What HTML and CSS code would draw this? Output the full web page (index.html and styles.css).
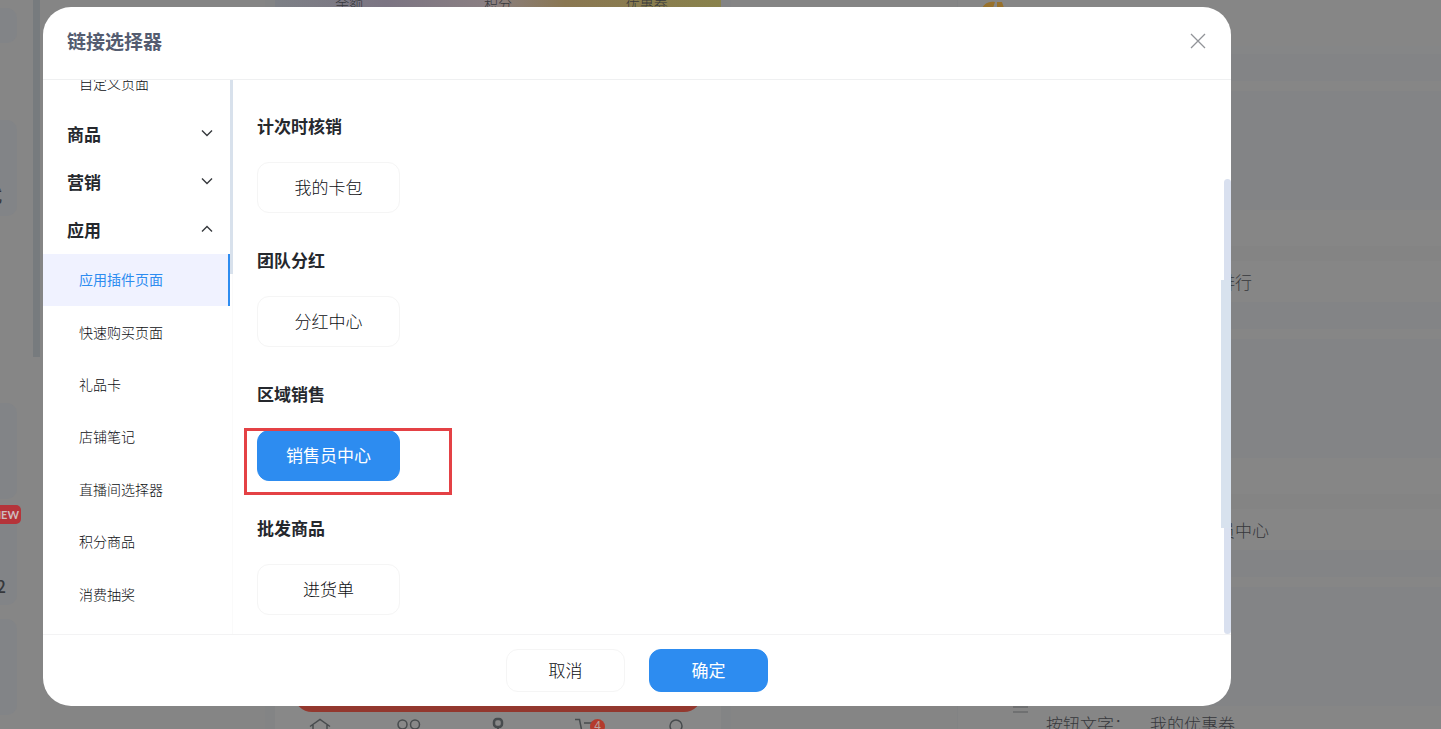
FILE: index.html
```html
<!DOCTYPE html>
<html lang="zh-CN">
<head>
<meta charset="utf-8">
<title>链接选择器</title>
<link rel="stylesheet" href="styles.css">
</head>
<body>
<div class="page">
  <aside class="widgets">
    <div class="widget widget-top"></div>
    <div class="widget"><span class="widget-text widget-text-cut">式</span></div>
    <div class="widget widget-late"><span class="tag-new">NEW</span></div>
    <div class="widget widget-count"><span class="widget-text">2</span></div>
  </aside>
  <section class="phone">
    <div class="wallet"><span>余额</span><span>积分</span><span>优惠券</span></div>
    <div class="phone-foot">
      <div class="banner"></div>
      <div class="tabbar">
        <svg width="24" height="24" viewBox="0 0 24 24"><path d="M2 14.500 12 7.500l10 7M5 13v10h14V13"/></svg>
        <svg width="24" height="24" viewBox="0 0 24 24"><circle cx="5.500" cy="12.500" r="4.500"/><circle cx="18" cy="12.500" r="4.500"/><circle cx="5.500" cy="24" r="4.500"/></svg>
        <svg width="24" height="24" viewBox="0 0 24 24"><rect x="8" y="7" width="8" height="8" rx="3" stroke-width="2.500"/><path d="M12 15v8" stroke-width="2"/></svg>
        <span class="cart">
          <svg width="24" height="24" viewBox="0 0 24 24"><path d="M0 7.500h4.500L7 20h12l2-9H9"/></svg>
          <span class="cart-count">4</span>
        </span>
        <svg width="24" height="24" viewBox="0 0 24 24"><circle cx="12" cy="14" r="6"/></svg>
      </div>
    </div>
  </section>
  <section class="settings">
    <div class="panel-head"><svg width="24" height="8" viewBox="0 0 24 8"><path d="M1 8C4 3 8 1 14 2L12 8zM16 2h5l2 6h-7z"/></svg></div>
    <div class="rule"></div>
    <div class="card card-small"></div>
    <div class="row row-thin"></div>
    <div class="card"></div>
    <div class="row row-field"><span>排行</span></div>
    <div class="card card-small"></div>
    <div class="row row-thin"></div>
    <div class="card"></div>
    <div class="row row-field"><span>员中心</span></div>
    <div class="card card-small"></div>
    <div class="row row-thin"></div>
    <div class="card"></div>
    <div class="field-line">
      <span class="handle"></span>
      <span class="field-label">按钮文字：</span>
      <span class="field-value">我的优惠券</span>
    </div>
  </section>
</div>

<div class="modal" role="dialog" aria-labelledby="modal-title">
  <header class="modal-head">
    <h1 class="modal-title" id="modal-title">链接选择器</h1>
    <button class="close" type="button" aria-label="关闭"><svg width="16" height="16" viewBox="0 0 16 16"><path d="M1 1l14 14M15 1L1 15"/></svg></button>
  </header>
  <div class="modal-body">
    <nav class="menu">
      <a class="menu-item menu-cut" href="#">自定义页面</a>
      <button class="group" type="button">商品<svg width="12" height="8" viewBox="0 0 12 8"><path d="M1 1.500l5 5 5-5"/></svg></button>
      <button class="group" type="button">营销<svg width="12" height="8" viewBox="0 0 12 8"><path d="M1 1.500l5 5 5-5"/></svg></button>
      <button class="group" type="button">应用<svg width="12" height="8" viewBox="0 0 12 8"><path d="M1 6.500l5-5 5 5"/></svg></button>
      <div class="submenu">
        <a class="menu-item active" href="#">应用插件页面</a>
        <a class="menu-item" href="#">快速购买页面</a>
        <a class="menu-item" href="#">礼品卡</a>
        <a class="menu-item" href="#">店铺笔记</a>
        <a class="menu-item" href="#">直播间选择器</a>
        <a class="menu-item" href="#">积分商品</a>
        <a class="menu-item" href="#">消费抽奖</a>
      </div>
      <span class="menu-thumb"></span>
    </nav>
    <main class="links">
      <section class="link-group"><h2>计次时核销</h2><button class="link" type="button">我的卡包</button></section>
      <section class="link-group"><h2>团队分红</h2><button class="link" type="button">分红中心</button></section>
      <section class="link-group"><h2>区域销售</h2><div class="marked"><button class="link chosen" type="button">销售员中心</button></div></section>
      <section class="link-group"><h2>批发商品</h2><button class="link" type="button">进货单</button></section>
      <span class="thumb thumb-outer"></span>
      <span class="thumb thumb-inner"></span>
    </main>
  </div>
  <footer class="modal-foot">
    <button class="action" type="button">取消</button>
    <button class="action primary" type="button">确定</button>
  </footer>
</div>
</body>
</html>
```
FILE: styles.css
```css
*, *::after { box-sizing: border-box; }
body {
  margin: 0;
  height: 100vh;
  overflow: hidden;
  position: relative;
  background: #858585;
  color: #0c0e12;
  font-family: "Noto Sans CJK SC", sans-serif;
  font-size: 17px;
  font-weight: 300;
}
button { font: inherit; color: inherit; background: none; border: 0; padding: 0; margin: 0; }
a { color: inherit; text-decoration: none; }
h1, h2 { margin: 0; font-weight: 700; }
svg { display: block; fill: none; }

.page { display: flex; height: 100%; overflow: hidden; color: #36383c; }

.widgets {
  width: 40px;
  flex: none;
  padding-right: 23px;
  background: linear-gradient(#777b7e, #777b7e) right top / 7px 357px no-repeat #868686;
}
.widget { position: relative; height: 96px; margin-bottom: 77px; border-radius: 0 10px 10px 0; background: #828487; }
.widget-top { height: 35px; margin-top: 8px; }
.widget-late { margin-top: 187px; margin-bottom: 10px; }
.widget-count { margin-bottom: 14px; box-shadow: 0 110px 0 #828487; }
.widget-text { position: absolute; right: 11px; bottom: 6px; line-height: 26px; font-weight: 500; }
.widget-text-cut { right: 15px; bottom: 8px; }
.tag-new {
  position: absolute;
  z-index: 1;
  right: -4px;
  bottom: -25px;
  height: 19px;
  padding: 0 2px;
  border-radius: 5px;
  background: #b5343a;
  color: #cdbcbe;
  white-space: nowrap;
  font: 700 11px/19px Lato, sans-serif;
}

.phone {
  width: 446px;
  flex: none;
  margin-left: 235px;
  display: flex;
  flex-direction: column;
  justify-content: space-between;
  background: #888;
  box-shadow: 0 0 0 10px #838485;
}
.wallet {
  display: grid;
  grid-template-columns: repeat(3, 1fr);
  height: 24px;
  text-align: center;
  font-size: 14px;
  line-height: 7px;
  background: linear-gradient(90deg, #7d8086, #7c7583 25%, #8b8083 48%, #8a7752 65%, #89824c);
}
.phone-foot { height: 57px; flex: none; }
.banner { height: 40px; margin: 0 19px; border-radius: 0 0 18px 18px; background: #93382e; }
.tabbar { display: grid; grid-template-columns: repeat(5, 1fr); justify-items: center; height: 17px; overflow: hidden; }
.tabbar svg { stroke: #484c4e; stroke-width: 1.5; }
.cart { position: relative; }
.cart-count {
  position: absolute;
  left: 15px;
  top: 7px;
  width: 15px;
  height: 15px;
  border-radius: 50%;
  background: #b43b2d;
  color: #b9a5a0;
  text-align: center;
  font: 12px/15px "Liberation Sans", sans-serif;
}

.settings { flex: 1; margin-left: 236px; padding-left: 23px; border-left: 1px solid #828384; background: #868686; }
.panel-head { height: 46px; }
.panel-head svg { fill: #98712b; }
.rule { height: 8px; background: #858687; }
.card { height: 119px; background: #838486; }
.card-small { height: 27px; }
.row { padding-left: 237px; background: #868686; }
.row-thin { height: 10px; }
.row-field { height: 92px; line-height: 34px; padding-top: 55px; background: linear-gradient(#868686 36px, #848484 36px, #848484 51px, #868686 51px); }
.field-line { display: flex; align-items: flex-start; padding-left: 32px; line-height: 30px; }
.handle { width: 15px; height: 7px; margin-right: 18px; border: solid #6f7071; border-width: 2px 0; }
.field-label { width: 104px; padding-top: 3px; }
.field-value { padding-top: 3px; }

.modal {
  position: absolute;
  inset: 7px 210px 23px 43px;
  display: flex;
  flex-direction: column;
  overflow: hidden;
  border-radius: 28px;
  background: #fff;
}
.modal-head { display: flex; align-items: center; justify-content: space-between; height: 73px; flex: none; padding: 0 25px 4px 24px; border-bottom: 1px solid #eff0f1; }
.modal-title { font-size: 19px; line-height: 28px; color: #545c70; }
.close svg { stroke: #919398; stroke-width: 1.3; }
.modal-body { display: flex; flex: 1; min-height: 0; overflow: hidden; }

.menu { position: relative; display: flex; flex-direction: column; width: 190px; flex: none; padding-right: 1px; border-right: 1px solid #fafafa; }
.menu-item { display: flex; align-items: center; padding: 0 0 2px 36px; font-size: 14px; }
.menu-cut { height: 52px; flex: none; margin-top: -22px; }
.group { display: flex; align-items: center; justify-content: space-between; height: 48px; flex: none; padding: 0 18px 2px 24px; font-weight: 700; color: #25282d; }
.group svg { stroke: #36393d; stroke-width: 1.4; }
.submenu { display: flex; flex: 1; flex-direction: column; padding-bottom: 13px; }
.submenu .menu-item { flex: 1; }
.submenu .active { margin-right: 1px; border-right: 2px solid #2d8cf0; background: #f0f2ff; color: #2d8cf0; font-weight: 400; }
.menu-thumb { position: absolute; right: -1px; top: 0; width: 3px; height: 194px; background: #d8e1ec; }

.links { position: relative; flex: 1; padding: 34px 24px 0; }
.link-group { margin-bottom: 35px; }
.link-group h2 { margin-bottom: 24px; font-size: 17px; line-height: 24px; color: #25282d; }
.link { display: block; width: 143px; height: 51px; padding-bottom: 2px; border: 1px solid #f5f5f5; border-radius: 12px; background: #fff; }
.chosen, .primary { border-color: #2d8cf0; background: #2d8cf0; color: #fff; font-weight: 400; }
.marked { position: relative; }
.marked::after { content: ""; position: absolute; left: -13px; top: -2px; width: 208px; height: 67px; border: 3px solid #e44145; }
.thumb { position: absolute; right: 0; }
.thumb-outer { top: 99px; bottom: 0; width: 7px; border-radius: 4px; background: #d9e0ef; }
.thumb-inner { top: 200px; width: 10px; height: 248px; background: #d8e2ee; }

.modal-foot { display: flex; justify-content: center; gap: 24px; height: 72px; flex: none; padding-top: 14px; border-top: 1px solid #f3f3f4; }
.action { width: 119px; height: 43px; padding-bottom: 2px; border: 1px solid #f5f5f5; border-radius: 12px; }
.primary { border-color: #2d8cf0; }
```
